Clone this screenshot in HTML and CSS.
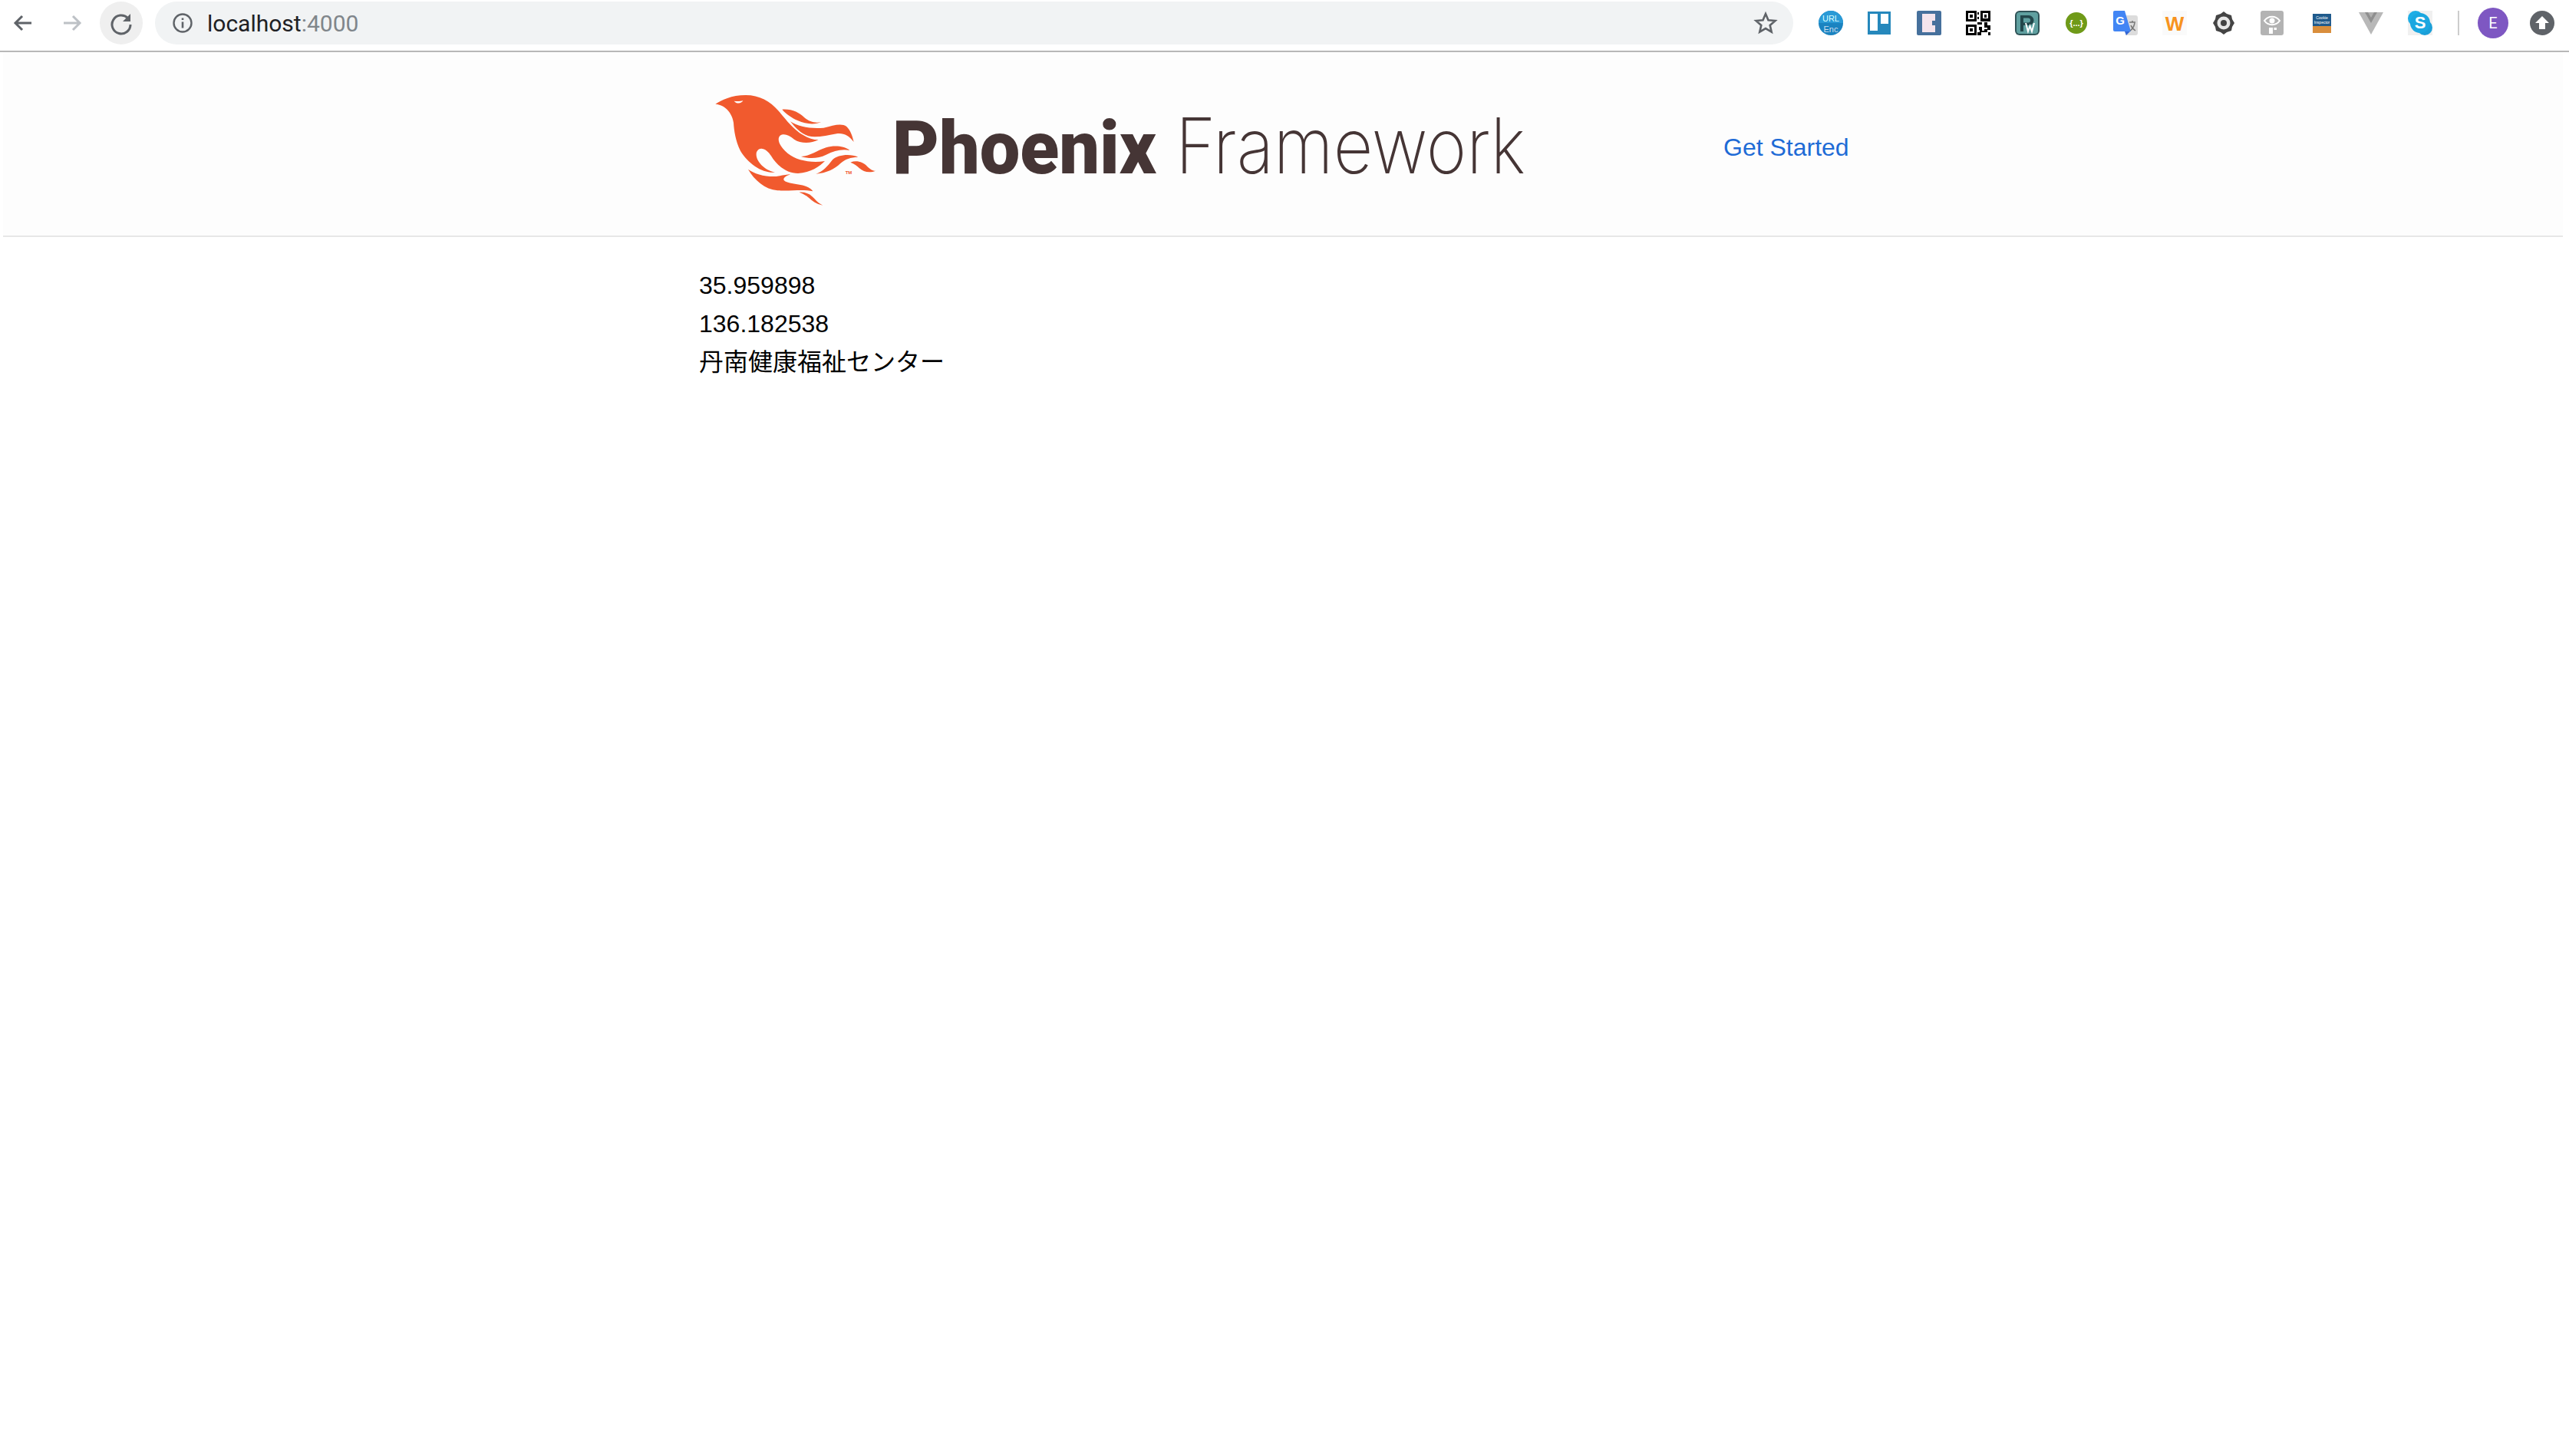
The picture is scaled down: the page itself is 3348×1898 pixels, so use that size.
FILE: index.html
```html
<!DOCTYPE html>
<html lang="en">
<head>
<meta charset="utf-8">
<title>Phoenix Framework</title>
<link rel="stylesheet" href="styles.css">
</head>
<body>
<div class="toolbar">
  <div class="nav">
    <span class="nav-btn"><svg viewBox="0 0 32 32" class="nav-ico"><path d="M27 16H6M15 7l-9 9 9 9" fill="none" stroke="#5f6368" stroke-width="3"/></svg></span>
    <span class="nav-btn"><svg viewBox="0 0 32 32" class="nav-ico"><path d="M5 16h21M17 7l9 9-9 9" fill="none" stroke="#bdc1c6" stroke-width="3"/></svg></span>
    <span class="nav-btn reload"><svg viewBox="0 0 32 32" class="nav-ico"><path d="M24.500 9.500A12 12 0 1 0 28 18" fill="none" stroke="#5f6368" stroke-width="3"/><path d="M28 4v10H18z" fill="#5f6368"/></svg></span>
  </div>
  <div class="omnibox">
    <svg viewBox="0 0 28 28" class="info"><circle cx="14" cy="14" r="11.500" fill="none" stroke="#5f6368" stroke-width="2.400"/><path d="M12.700 12.500h2.600v8h-2.600zM12.700 7.500h2.600v2.600h-2.600z" fill="#5f6368"/></svg>
    <span class="url">localhost<span class="port">:4000</span></span>
    <svg viewBox="0 0 32 32" class="star"><path d="M16 4l3.500 8.300 9 .7-6.800 5.900 2 8.800L16 23.100l-7.700 4.600 2-8.800L3.500 13l9-.7z" fill="none" stroke="#5f6368" stroke-width="2.600"/></svg>
  </div>
  <div class="extensions">
    <span class="ext"><svg viewBox="0 0 32 32" class="ext-ico"><circle cx="16" cy="16" r="16" fill="#1b83c0"/><path d="M0 16a16 16 0 0 1 32 0z" fill="#2a9ad6"/><text x="16" y="14" class="ext-text ext-url">URL</text><text x="16" y="28" class="ext-text ext-enc">Enc</text></svg></span>
    <span class="ext"><svg viewBox="0 0 32 32" class="ext-ico"><rect y="1" width="30" height="30" fill="#2688bc"/><rect x="3" y="4" width="10" height="22" fill="#fff"/><rect x="17" y="4" width="10" height="13" fill="#fff"/></svg></span>
    <span class="ext"><svg viewBox="0 0 32 32" class="ext-ico"><rect width="32" height="32" rx="2" fill="#46709c"/><path d="M7 4h17v9h-4v6h4v9H7z" fill="#f4e4ec"/></svg></span>
    <span class="ext"><svg viewBox="0 0 32 32" class="ext-ico"><rect width="32" height="32" fill="#fff"/><path fill-rule="evenodd" d="M0 0h14v14H0zM3 3v8h8V3zM5 5h4v4H5zM19 0h13v14H19zM22 3v7h7V3zM24 5h3v4h-3zM0 18h14v14H0zM3 21v8h8v-8zM5 23h4v4H5zM15 2h2v3h-2zM15 8h2v3h-2zM15 15h6v3h-6zM24 15h4v4h4v6h-4v-3h-4zM17 21h4v5h3v-2h4v4h-8v4h-5v-4h3v-3h-1zM29 28h3v4h-3z" fill="#000"/></svg></span>
    <span class="ext"><svg viewBox="0 0 32 32" class="ext-ico"><rect width="32" height="32" rx="6" fill="#2f5357"/><rect x="2" y="2" width="28" height="28" rx="4" fill="#5fa0a0"/><path d="M7 6h11a6 6 0 0 1 0 13h-7v8H7zM11 9.500v6h6a3 3 0 0 0 0-6z" fill="#23474b"/><path d="M14 16l3 11 2.500-7 2.500 7 3-11" fill="none" stroke="#fff" stroke-width="2"/></svg></span>
    <span class="ext"><svg viewBox="0 0 32 32" class="ext-ico"><circle cx="16" cy="16" r="14" fill="#6f9a18"/><text x="16" y="20" class="ext-text ext-json">{...}</text></svg></span>
    <span class="ext"><svg viewBox="0 0 32 32" class="ext-ico"><path d="M14 6h15a3 3 0 0 1 3 3v20a3 3 0 0 1-3 3H16z" fill="#dcdcdc"/><path d="M2 0h13l8 27H2a2 2 0 0 1-2-2V2a2 2 0 0 1 2-2z" fill="#4285f4"/><path d="M15 27h7l-5 5z" fill="#3367d6"/><text x="9" y="18" class="ext-text ext-g">G</text><path d="M21 15h8M25 13v2M22 26c3-2 5-5 6-10M23 19c1 3 3 5 6 7" fill="none" stroke="#777" stroke-width="1.500"/></svg></span>
    <span class="ext"><svg viewBox="0 0 32 32" class="ext-ico"><rect width="32" height="32" fill="#fafafa"/><text x="16" y="26" class="ext-text ext-w">W</text></svg></span>
    <span class="ext"><svg viewBox="0 0 32 32" class="ext-ico"><path d="M16 1l4 3 6 2 1 5 3 5-3 5-1 5-6 2-4 3-4-3-6-2-1-5-3-5 3-5 1-5 6-2z" fill="#444"/><circle cx="16" cy="16" r="8.500" fill="#e8e8e8"/><circle cx="16" cy="16" r="4" fill="#444"/></svg></span>
    <span class="ext"><svg viewBox="0 0 32 32" class="ext-ico"><rect width="30" height="32" rx="3" fill="#b3b3b3"/><path d="M5 13c5-7 15-7 20 0-5 7-15 7-20 0z" fill="none" stroke="#fff" stroke-width="2"/><circle cx="15" cy="13" r="3.500" fill="#fff"/><path d="M11 22h5v8h-5zM17.500 22H21v3h-3.500z" fill="#fff"/></svg></span>
    <span class="ext"><svg viewBox="0 0 32 32" class="ext-ico"><rect x="4" y="4" width="24" height="25" fill="#1f5a8c"/><rect x="4" y="20" width="24" height="9" fill="#d98e3c"/><text x="16" y="11" class="ext-text ext-ck">Cookie</text><text x="16" y="17" class="ext-text ext-ck">Inspector</text></svg></span>
    <span class="ext"><svg viewBox="0 0 32 32" class="ext-ico"><path d="M0 2h32L16 31z" fill="#b8b8b8"/><path d="M8 2h16l-8 14z" fill="#8f8f8f"/><path d="M12 2h8l-4 7z" fill="#b0b0b0"/></svg></span>
    <span class="ext"><svg viewBox="0 0 32 32" class="ext-ico"><rect width="32" height="32" fill="#f0f0f0"/><circle cx="10" cy="10" r="10" fill="#1daee6"/><circle cx="22" cy="22" r="10" fill="#1b9fd8"/><circle cx="16" cy="16" r="13" fill="#1ba7e0"/><text x="16" y="23" class="ext-text ext-s">S</text></svg></span>
  </div>
  <span class="divider"></span>
  <span class="avatar">E</span>
  <span class="update"><svg viewBox="0 0 32 32" class="ext-ico"><circle cx="16" cy="16" r="16" fill="#5f6368"/><path d="M16 7l9 9h-5v8h-8v-8H7z" fill="#fff"/></svg></span>
</div>
<header class="site-header">
  <svg class="logo" viewBox="900 87 1160 210">
    <g transform="translate(900 100) scale(0.33333)" class="flame">
      <path d="M97 107C120 92 160 72 215 72C270 72 310 95 345 135C375 170 400 205 440 228C460 240 480 247 500 247C470 262 430 262 405 245C385 228 365 220 350 230C335 245 350 275 380 300C415 328 470 338 525 330C505 350 470 375 420 378C375 378 335 345 315 310C300 285 270 268 258 295C250 325 285 365 330 374C280 378 225 340 195 290C175 250 170 210 168 180C165 150 140 110 97 107Z"/>
      <path d="M225 362C250 380 290 392 335 390C350 388 375 382 390 382C375 388 360 395 365 405C375 418 420 418 450 428C465 434 475 442 478 448C440 440 390 448 340 445C290 440 250 405 225 362Z"/>
      <path d="M425 452C450 450 470 460 485 478C495 490 505 497 517 503C490 498 475 485 460 472C450 463 437 456 425 452Z"/>
      <path d="M358 128C395 125 425 140 445 160C465 178 490 182 510 177C490 188 450 187 420 172C395 160 375 148 358 128Z"/>
      <path d="M390 175C420 195 470 205 520 200C560 190 590 180 610 195C625 210 632 230 638 255C620 230 600 220 575 222C530 230 490 240 460 232C430 222 410 200 390 175Z"/>
      <path d="M432 312C470 310 490 290 530 277C560 268 600 270 622 288C590 282 560 290 530 305C500 320 465 322 432 312Z"/>
      <path d="M490 380C520 370 535 350 555 325C575 305 625 300 655 315C625 315 605 322 585 340C565 360 530 378 490 380Z"/>
      <path d="M625 335C650 325 675 335 690 350C700 360 710 368 723 368C700 378 675 372 660 358C650 348 640 340 625 335Z"/>
      <path d="M170 95C180 97 195 97 205 93C200 105 180 108 170 95Z" class="eye"/>
      <text x="605" y="381" class="tm">TM</text>
    </g>
    <text x="1163" y="226" textLength="344" lengthAdjust="spacingAndGlyphs" class="word-bold">Phoenix</text>
    <text x="1532" y="226" textLength="456" lengthAdjust="spacingAndGlyphs" class="word-thin">Framework</text>
  </svg>
  <a class="get-started" href="#">Get Started</a>
</header>
<main class="content">
  <div>35.959898</div>
  <div>136.182538</div>
  <div>丹南健康福祉センター</div>
</main>
</body>
</html>
```
FILE: styles.css
```css
* { box-sizing: border-box; }
html, body { margin: 0; background: #fff; }
body { font-family: "Liberation Sans", Arial, sans-serif; color: #000; }
.toolbar { display: flex; align-items: center; height: 68px; padding: 3px 0 9px 0; border-bottom: 2px solid #b8b8b8; background: #fff; }
.nav { display: flex; align-items: center; width: 202px; padding-left: 2px; gap: 8px; }
.nav-btn { display: flex; align-items: center; justify-content: center; width: 56px; height: 56px; border-radius: 50%; }
.reload { background: #efefef; }
.nav-ico { width: 32px; height: 32px; }
.omnibox { display: flex; align-items: center; width: 2135px; height: 56px; padding: 0 20px 0 22px; border-radius: 28px; background: #f1f3f4; }
.info { width: 28px; height: 28px; }
.url { flex: 1; margin-left: 18px; font: 400 30px Roboto, sans-serif; color: #202124; }
.port { color: #80868b; }
.star { width: 32px; height: 32px; }
.extensions { display: flex; margin-left: 17px; }
.ext { display: flex; align-items: center; justify-content: center; width: 64px; height: 56px; }
.ext-ico { width: 32px; height: 32px; }
.ext-text { font-family: "Liberation Sans", sans-serif; text-anchor: middle; }
.ext-url { font-size: 11px; fill: #dff; }
.ext-enc { font-size: 11px; fill: #cde; }
.ext-json { font-size: 11px; font-weight: 700; fill: #fff; }
.ext-g { font-size: 15px; font-weight: 700; fill: #fff; }
.ext-w { font-size: 26px; font-weight: 700; fill: #f7931e; }
.ext-ck { font-size: 5px; fill: #fff; }
.ext-s { font-size: 22px; font-weight: 700; fill: #fff; }
.divider { width: 2px; height: 32px; margin: 0 24px 0 17px; background: #ccc; }
.avatar { display: flex; align-items: center; justify-content: center; width: 40px; height: 40px; border-radius: 50%; background: #7e57c2; color: #fff; font: 400 20px Roboto, sans-serif; }
.update { display: flex; width: 32px; height: 32px; margin-left: 28px; }
.site-header { display: flex; align-items: center; height: 241px; margin: 0 8px 0 4px; padding: 8px 0 0 896px; background: #fdfdfd; border-bottom: 2px solid #e7e7e7; }
.logo { flex: none; width: 1160px; height: 210px; }
.flame { fill: #f15a2e; }
.eye { fill: #fdfdfd; }
.tm { font: 700 18px "Liberation Sans", sans-serif; fill: #f15a2e; }
.word-bold { font: 900 97px Roboto, sans-serif; fill: #453535; }
.word-thin { font: 250 100px Inter, sans-serif; fill: #453535; }
.get-started { margin: 2px 0 0 186px; font-size: 32px; color: #1e6bd6; text-decoration: none; }
.content { padding: 38px 0 0 911px; font-family: "Liberation Sans", "Noto Sans CJK JP", sans-serif; font-size: 32px; line-height: 50px; }
```
